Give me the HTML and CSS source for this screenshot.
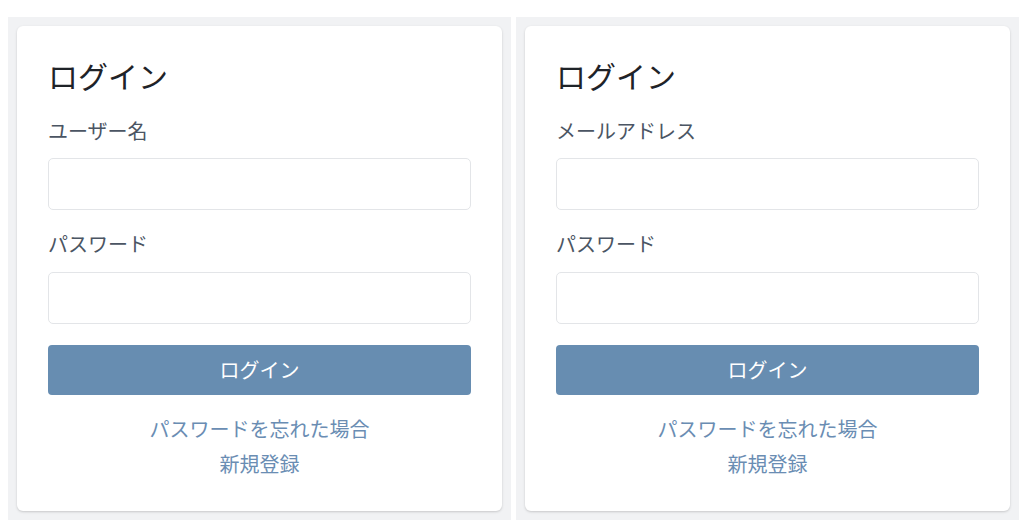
FILE: index.html
```html
<!DOCTYPE html>
<html lang="ja">
<head>
<meta charset="utf-8">
<link rel="stylesheet" href="styles.css">
</head>
<body>
<div class="page">
  <div class="panel">
    <div class="card">
      <h1 class="title">ログイン</h1>
      <label class="label">ユーザー名</label>
      <div class="input"></div>
      <label class="label label-2">パスワード</label>
      <div class="input"></div>
      <div class="button">ログイン</div>
      <div class="links">
        <a class="link">パスワードを忘れた場合</a>
        <a class="link">新規登録</a>
      </div>
    </div>
  </div>
  <div class="panel">
    <div class="card">
      <h1 class="title">ログイン</h1>
      <label class="label">メールアドレス</label>
      <div class="input"></div>
      <label class="label label-2">パスワード</label>
      <div class="input"></div>
      <div class="button">ログイン</div>
      <div class="links">
        <a class="link">パスワードを忘れた場合</a>
        <a class="link">新規登録</a>
      </div>
    </div>
  </div>
</div>
</body>
</html>
```
FILE: styles.css
```css
* { box-sizing: border-box; }
html, body { margin: 0; padding: 0; background: #ffffff; }
body {
  font-family: "Noto Sans CJK JP", "Noto Sans", sans-serif;
  width: 1024px;
  height: 526px;
  overflow: hidden;
}
.page {
  display: grid;
  grid-template-columns: 503px 503px;
  column-gap: 5px;
  padding: 17px 0 0 8px;
}
.panel {
  background: #f1f2f4;
  padding: 9px;
  height: 503px;
}
.card {
  background: #ffffff;
  border-radius: 6px;
  box-shadow: 0 1px 3px rgba(0,0,0,0.12), 0 1px 2px rgba(0,0,0,0.06);
  height: 485px;
  padding: 31px 31px 0 31px;
  display: flex;
  flex-direction: column;
}
.title {
  margin: 0 0 24px 0;
  font-size: 30px;
  line-height: 36px;
  font-weight: 400;
  color: #1f2328;
}
.label {
  display: block;
  font-size: 20px;
  line-height: 28px;
  color: #4b5563;
  margin-bottom: 13px;
}
.label-2 { margin-top: 20px; margin-bottom: 14px; }
.input {
  height: 52px;
  border: 1px solid #e3e5e8;
  border-radius: 5px;
  background: #fff;
}
.button {
  margin-top: 21px;
  height: 50px;
  background: #678db1;
  border-radius: 4px;
  color: #ffffff;
  font-size: 20px;
  line-height: 50px;
  text-align: center;
}
.links {
  margin-top: 16px;
  display: flex;
  flex-direction: column;
  align-items: center;
}
.link {
  font-size: 20px;
  line-height: 35px;
  color: #6a8db3;
  text-decoration: none;
}
```
